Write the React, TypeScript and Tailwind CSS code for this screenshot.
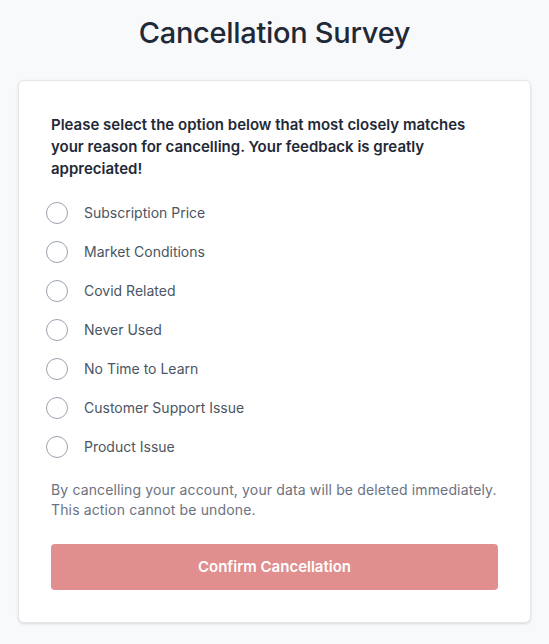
import { useState } from "react";

const reasons = [
  "Subscription Price",
  "Market Conditions",
  "Covid Related",
  "Never Used",
  "No Time to Learn",
  "Customer Support Issue",
  "Product Issue",
];

export default function App() {
  const [selected, setSelected] = useState<string | null>(null);

  return (
    <div
      className="min-h-[644px] bg-[#f8f9fb] pt-[15px]"
      style={{ fontFamily: "Inter, 'Noto Sans', sans-serif" }}
    >
      <h1 className="text-center text-[29px] leading-[36px] font-medium tracking-[-0.01em] text-[#1f2937]">
        Cancellation Survey
      </h1>

      <div className="mx-[18px] mt-[29px] rounded-md border border-[#e5e7eb] bg-white px-8 pt-[33px] pb-[32px] shadow-sm">
        <p className="pr-[12px] text-[15px] leading-[22px] font-semibold text-[#1f2937]">
          Please select the option below that most closely matches your reason
          for cancelling. Your feedback is greatly appreciated!
        </p>

        {/* Options */}
        <div className="-ml-[5px] mt-[13px] flex flex-col">
          {reasons.map((r) => (
            <label
              key={r}
              className="flex h-[39px] cursor-pointer items-center gap-[16px]"
            >
              <input
                type="radio"
                name="reason"
                className="sr-only"
                checked={selected === r}
                onChange={() => setSelected(r)}
              />
              <span className="flex h-[22px] w-[22px] items-center justify-center rounded-full border border-[#9ca3af] bg-white">
                {selected === r && (
                  <span className="h-[10px] w-[10px] rounded-full bg-[#374151]" />
                )}
              </span>
              <span className="text-[14px] text-[#4b5563]">{r}</span>
            </label>
          ))}
        </div>

        <p className="mt-[14px] text-[14px] leading-[20px] tracking-[0.01em] text-[#6b7280]">
          By cancelling your account, your data will be deleted immediately.
          This action cannot be undone.
        </p>

        <button
          className="mt-[24px] h-[46px] w-full rounded-[4px] bg-[#e08e8e] text-[15px] font-semibold text-white"
          disabled={!selected}
        >
          Confirm Cancellation
        </button>
      </div>
    </div>
  );
}
